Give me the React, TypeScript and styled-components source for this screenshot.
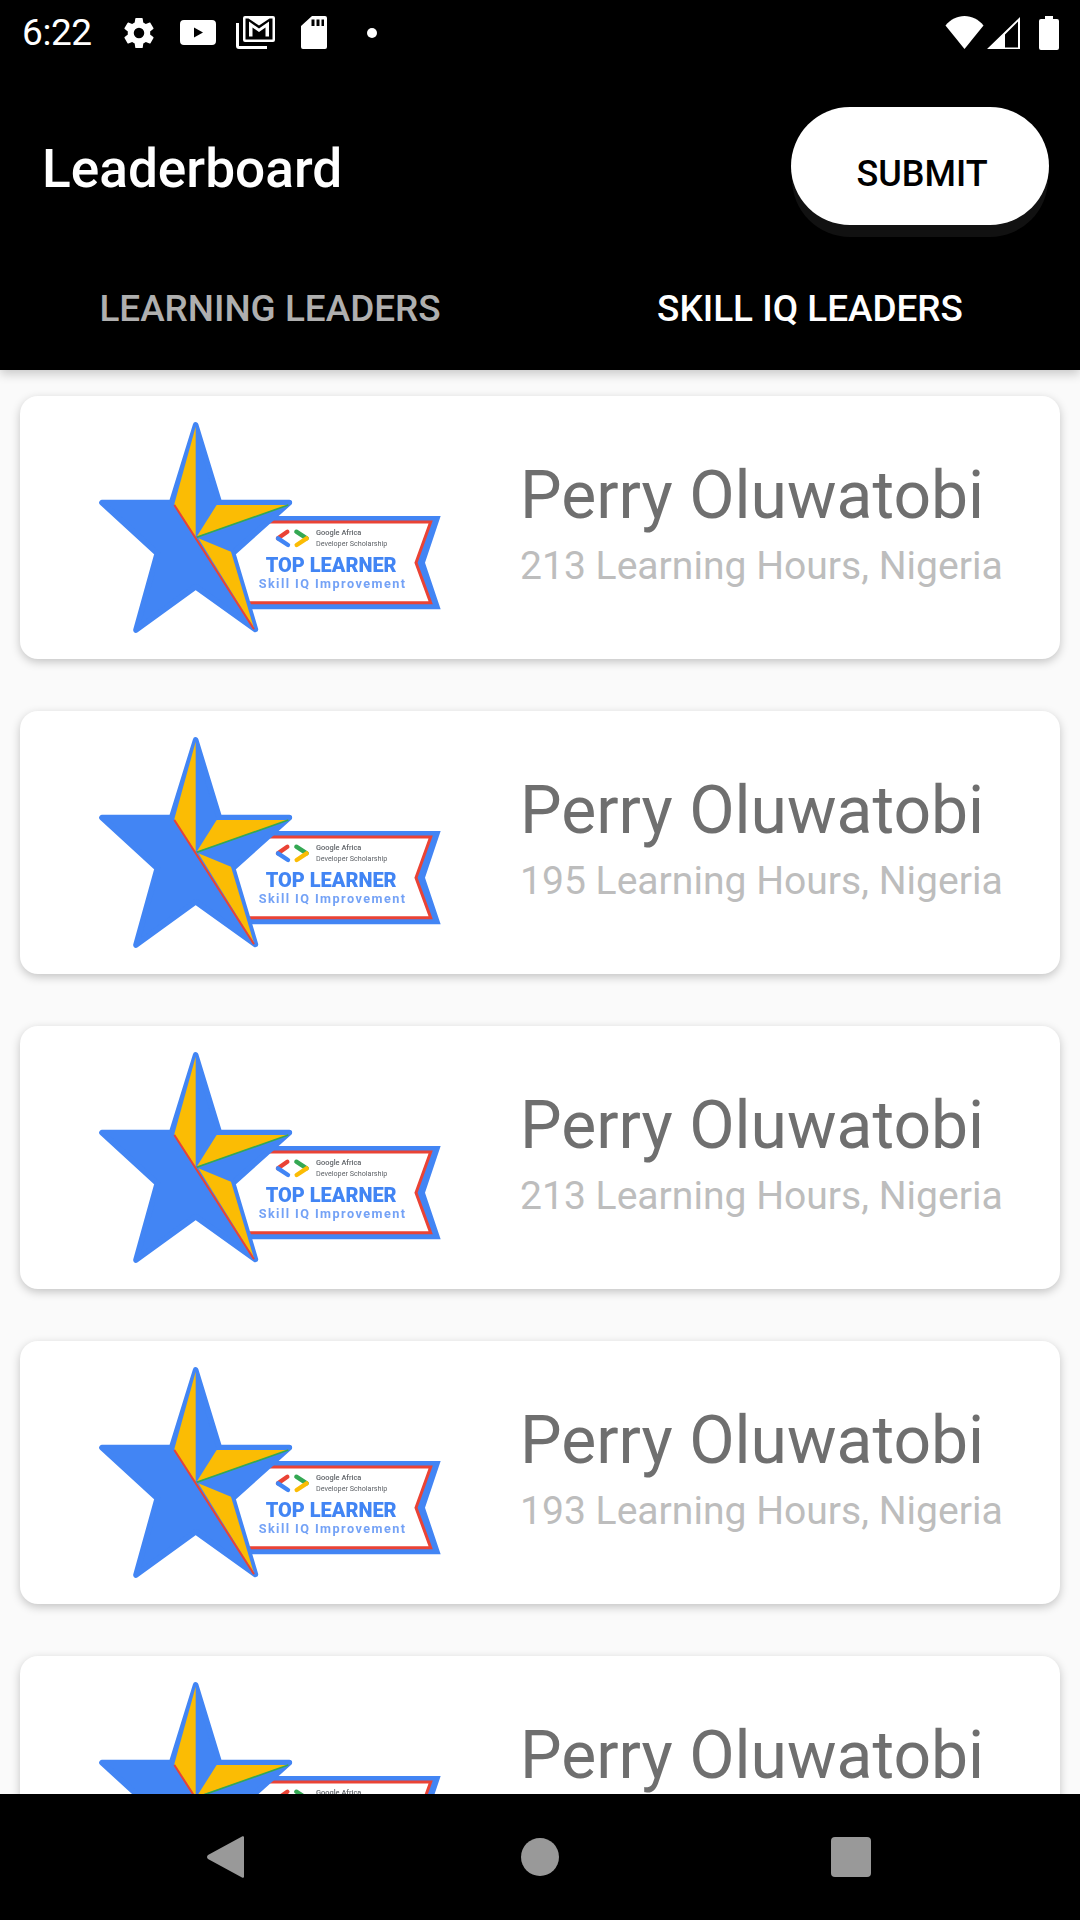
import React, { FunctionComponent } from 'react';
import styled, { createGlobalStyle } from 'styled-components';

const GlobalStyle = createGlobalStyle`
	html, body {
		margin: 0;
		padding: 0;
		background: #000;
	}
	body {
		font-family: Roboto, "Liberation Sans", sans-serif;
	}
`;

const Screen = styled.div`
	width: 1080px;
	height: 1920px;
	display: flex;
	flex-direction: column;
	overflow: hidden;
	background: #fafafa;
`;
const Header = styled.header`
	position: relative;
	z-index: 1;
	height: 370px;
	flex: none;
	background: #000;
	box-shadow: 0 4px 10px rgba(0, 0, 0, 0.2);
`;
const StatusBar = styled.div`
	height: 63px;
	display: flex;
	align-items: center;
	padding: 2px 21px 0 22px;
	box-sizing: border-box;
	color: #fff;
`;
const Clock = styled.span`
	font-size: 37px;
	font-weight: 400;
	width: 99px;
	flex: none;
	letter-spacing: -0.4px;
`;
const StatusIcon = styled.svg<{ $gap?: number }>`
	display: block;
	flex: none;
	margin-left: ${({ $gap }) => $gap ?? 0}px;
	fill: #fff;
`;
const Spacer = styled.div`
	flex: 1;
`;
const Toolbar = styled.div`
	height: 184px;
	display: flex;
	justify-content: space-between;
	align-items: flex-start;
	padding: 44px 31px 0 42px;
	box-sizing: border-box;
`;
const Title = styled.h1`
	margin: 3px 0 0;
	color: #fff;
	font-size: 53.2px;
	font-weight: 500;
	line-height: 118px;
`;
const SubmitButton = styled.button`
	width: 258px;
	height: 118px;
	border: 0;
	border-radius: 59px;
	background: #fff;
	color: #000;
	font-family: inherit;
	font-size: 36px;
	font-weight: 500;
	padding: 16px 0 0 4px;
	box-shadow: 0 13px 0 -1px #111;
`;
const Tabs = styled.nav`
	height: 122px;
	display: flex;
	align-items: center;
`;
const Tab = styled.div<{ $active?: boolean }>`
	flex: 1;
	text-align: center;
	font-size: 36.9px;
	font-weight: 500;
	color: ${({ $active }) => ($active ? '#fff' : 'rgba(255, 255, 255, 0.7)')};
`;
const List = styled.main`
	flex: 1;
	min-height: 0;
	overflow: hidden;
	display: flex;
	flex-direction: column;
	gap: 52px;
	padding: 26px 20px 0;
`;
const Card = styled.article`
	flex: none;
	height: 263px;
	display: flex;
	align-items: flex-start;
	background: #fff;
	border-radius: 18px;
	padding: 14px 0 0 50px;
	box-sizing: border-box;
	box-shadow: 0 3px 10px rgba(0, 0, 0, 0.22);
`;
const BadgeSvg = styled.svg`
	flex: none;
	display: block;
	filter: blur(0.6px);
	font-family: Roboto, "Liberation Sans", sans-serif;
`;
const Info = styled.div`
	margin: 48px 0 0 50px;
	white-space: nowrap;
`;
const Name = styled.div`
	color: #6f6f6f;
	font-size: 66px;
	line-height: 76px;
`;
const Hours = styled.div`
	margin-top: 8px;
	color: #bdbdbd;
	font-size: 39.1px;
	line-height: 48px;
`;
const NavBar = styled.div`
	position: relative;
	z-index: 1;
	height: 126px;
	flex: none;
	background: #000;
	display: flex;
	align-items: center;
	padding: 0 0 0 207px;
	box-sizing: border-box;
`;
const NavIcon = styled.svg<{ $gap?: number }>`
	display: block;
	flex: none;
	margin-left: ${({ $gap }) => $gap ?? 0}px;
	fill: #999;
`;

const Badge: FunctionComponent = () => (
	<BadgeSvg width={400} height={240} viewBox="0 0 1200 720">
		<polygon points="600,318 1112,318 1065,458 1112,598 525,598 470,430" fill="#4285f4" />
		<polygon points="580,335 1085,335 1040,458 1085,580 520,580 470,430" fill="#fff" />
		<polyline
			points="590,336 1082,336 1038,458 1082,578 525,578"
			fill="none"
			stroke="#ea4335"
			strokeWidth="9"
		/>
		<polygon
			points="377,45 448,278 658,278 488,430 556,658 377,530 198,660 262,430 96,278 305,278"
			fill="#4285f4"
			stroke="#4285f4"
			strokeWidth="17"
			strokeLinejoin="round"
		/>
		<polygon points="377,50 313,282 377,380" fill="#fbbc04" />
		<polygon points="440,285 655,285 380,380" fill="#fbbc04" />
		<polygon points="385,385 483,425 552,655" fill="#fbbc04" />
		<line x1="313" y1="285" x2="552" y2="658" stroke="#ea4335" strokeWidth="6" />
		<line x1="380" y1="382" x2="655" y2="285" stroke="#34a853" strokeWidth="5" />
		<g strokeWidth="13" strokeLinecap="round" fill="none">
			<line x1="652" y1="365" x2="624" y2="385" stroke="#ea4335" />
			<line x1="624" y1="385" x2="654" y2="405" stroke="#4285f4" />
			<line x1="679" y1="365" x2="710" y2="385" stroke="#34a853" />
			<line x1="710" y1="385" x2="680" y2="405" stroke="#fbbc04" />
		</g>
		<text x="738" y="376" fontSize="22" fontWeight="500" fill="#5f6368" textLength="136" lengthAdjust="spacingAndGlyphs">
			Google Africa
		</text>
		<text x="738" y="407" fontSize="22" fill="#5f6368" textLength="214" lengthAdjust="spacingAndGlyphs">
			Developer Scholarship
		</text>
		<text x="587" y="485" fontSize="63" fontWeight="900" fill="#4285f4" textLength="393" lengthAdjust="spacingAndGlyphs">
			TOP LEARNER
		</text>
		<text x="566" y="533" fontSize="38" fontWeight="700" fill="#74a2f6" textLength="439">
			Skill IQ Improvement
		</text>
	</BadgeSvg>
);

const hours = [213, 195, 213, 193, 190];

const App: FunctionComponent = () => (
	<Screen>
		<GlobalStyle />
		<Header>
			<StatusBar>
				<Clock>6:22</Clock>
				<StatusIcon width={36} height={36} viewBox="0 0 24 24">
					<path d="M19.4 13c.04-.32.07-.65.07-1s-.03-.68-.07-1l2.1-1.65c.2-.15.25-.42.12-.64l-2-3.46c-.12-.22-.39-.3-.61-.22l-2.49 1c-.52-.4-1.08-.73-1.69-.98l-.38-2.65A.49.49 0 0 0 14 2h-4c-.25 0-.46.18-.49.42l-.38 2.65c-.61.25-1.17.59-1.69.98l-2.49-1a.5.5 0 0 0-.61.22l-2 3.46c-.13.22-.07.49.12.64L4.57 11c-.04.32-.07.66-.07 1s.03.68.07 1l-2.11 1.65c-.19.15-.24.42-.12.64l2 3.46c.12.22.39.3.61.22l2.49-1c.52.4 1.08.73 1.69.98l.38 2.65c.03.24.24.42.49.42h4c.25 0 .46-.18.49-.42l.38-2.65c.61-.25 1.17-.59 1.69-.98l2.49 1c.23.09.49 0 .61-.22l2-3.46c.12-.22.07-.49-.12-.64L19.4 13zM12 15.5a3.5 3.5 0 1 1 0-7 3.5 3.5 0 0 1 0 7z" />
				</StatusIcon>
				<StatusIcon $gap={23} width={36} height={25} viewBox="0 0 36 25">
					<path
						fillRule="evenodd"
						d="M4 0h28a4 4 0 0 1 4 4v17a4 4 0 0 1-4 4H4a4 4 0 0 1-4-4V4a4 4 0 0 1 4-4zM14 7.500v10l9-5z"
					/>
				</StatusIcon>
				<StatusIcon $gap={20} width={39} height={33} viewBox="0 0 39 33">
					<path
						fillRule="evenodd"
						d="M9 0h28a2 2 0 0 1 2 2v22a2 2 0 0 1-2 2H9a2 2 0 0 1-2-2V2a2 2 0 0 1 2-2zM9.500 2.500v21h27v-21h-3L23 9.500 12.500 2.500zM13 5.500l10 7 10-7v15h-3.500v-9L23 16l-6.500-4.500v9H13z"
					/>
					<path d="M0 7h3v23h28v3H3a3 3 0 0 1-3-3z" />
				</StatusIcon>
				<StatusIcon $gap={26} width={26} height={33} viewBox="0 0 26 33">
					<path
						fillRule="evenodd"
						d="M11 0h13a2 2 0 0 1 2 2v29a2 2 0 0 1-2 2H2a2 2 0 0 1-2-2V10zM10.500 3.500V10h3V3.500zM15.500 3.500V10h3V3.500zM20.500 3.500V10h2.500V3.500z"
					/>
				</StatusIcon>
				<StatusIcon $gap={40} width={10} height={10} viewBox="0 0 10 10">
					<circle cx="5" cy="5" r="5" />
				</StatusIcon>
				<Spacer />
				<StatusIcon width={39} height={33} viewBox="0 0 39 33">
					<path d="M19.500 33 .5 9.500C5.500 3.500 12 0 19.500 0s14 3.500 19 9.500z" />
				</StatusIcon>
				<StatusIcon $gap={3} width={33} height={32} viewBox="0 0 33 32">
					<path fillRule="evenodd" d="M33 0v32H0zM31 4.500 18 17.500v13h13z" />
				</StatusIcon>
				<StatusIcon $gap={19} width={20} height={34} viewBox="0 0 20 34">
					<path d="M6 0h8v3h4a2 2 0 0 1 2 2v27a2 2 0 0 1-2 2H2a2 2 0 0 1-2-2V5a2 2 0 0 1 2-2h4z" />
				</StatusIcon>
			</StatusBar>
			<Toolbar>
				<Title>Leaderboard</Title>
				<SubmitButton>SUBMIT</SubmitButton>
			</Toolbar>
			<Tabs>
				<Tab>LEARNING LEADERS</Tab>
				<Tab $active>SKILL IQ LEADERS</Tab>
			</Tabs>
		</Header>
		<List>
			{hours.map((count, index) => (
				<Card key={index}>
					<Badge />
					<Info>
						<Name>Perry Oluwatobi</Name>
						<Hours>{count} Learning Hours, Nigeria</Hours>
					</Info>
				</Card>
			))}
		</List>
		<NavBar>
			<NavIcon width={37} height={42} viewBox="0 0 37 42">
				<path d="M35 .5c1-.8 2-.2 2 1v39c0 1.200-1 1.800-2 1L1 23c-1.300-1-1.300-3 0-4z" />
			</NavIcon>
			<NavIcon $gap={277} width={38} height={38} viewBox="0 0 38 38">
				<circle cx="19" cy="19" r="19" />
			</NavIcon>
			<NavIcon $gap={272} width={40} height={40} viewBox="0 0 40 40">
				<rect width="40" height="40" rx="4" />
			</NavIcon>
		</NavBar>
	</Screen>
);

export default App;
